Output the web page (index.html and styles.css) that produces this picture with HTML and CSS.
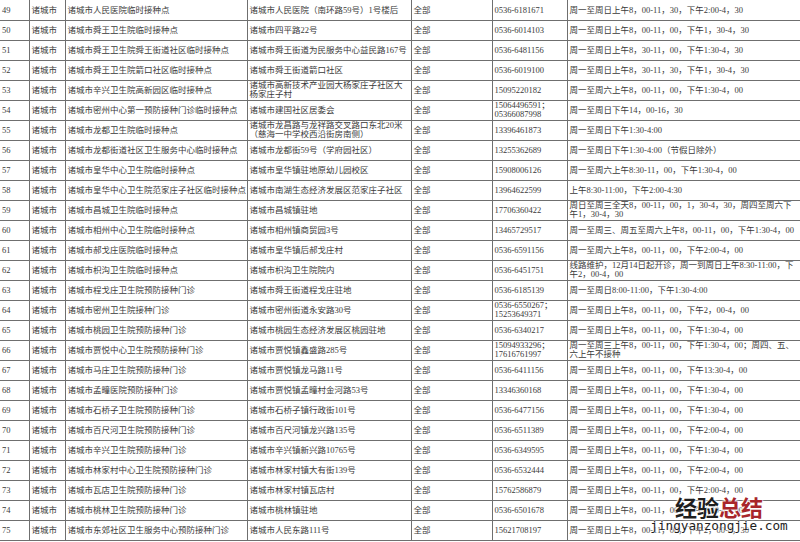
FILE: index.html
```html
<!DOCTYPE html>
<html lang="zh-CN">
<head>
<meta charset="utf-8">
<title>诸城市接种点</title>
<link rel="stylesheet" href="styles.css">
</head>
<body>
<div class="page">
<table class="grid">
<colgroup>
<col class="c-no"><col class="c-city"><col class="c-name"><col class="c-addr"><col class="c-scope"><col class="c-tel"><col class="c-time">
</colgroup>
<tbody>
<tr><td>49</td><td>诸城市</td><td>诸城市人民医院临时接种点</td><td>诸城市人民医院（南环路59号）1号楼后</td><td>全部</td><td>0536-6181671</td><td>周一至周日上午8，00-11，30，下午2:00-4，30</td></tr>
<tr><td>50</td><td>诸城市</td><td>诸城市舜王卫生院临时接种点</td><td>诸城市四平路22号</td><td>全部</td><td>0536-6014103</td><td>周一至周日上午8，00-11，00，下午1，30-4，30</td></tr>
<tr><td>51</td><td>诸城市</td><td>诸城市舜王卫生院舜王街道社区临时接种点</td><td>诸城市舜王街道为民服务中心益民路167号</td><td>全部</td><td>0536-6481156</td><td>周一至周日上午8，30-11，00，下午1:30-4，30</td></tr>
<tr><td>52</td><td>诸城市</td><td>诸城市舜王卫生院箭口社区临时接种点</td><td>诸城市舜王街道箭口社区</td><td>全部</td><td>0536-6019100</td><td>周一至周日上午8，30-11，30，下午1，30-4，30</td></tr>
<tr><td>53</td><td>诸城市</td><td>诸城市辛兴卫生院高新园区临时接种点</td><td class="two">诸城市高新技术产业园大杨家庄子社区大<br>杨家庄子村</td><td>全部</td><td>15095220182</td><td>周一至周六上午8，00-11，00，下午1:30-4，00</td></tr>
<tr><td>54</td><td>诸城市</td><td>诸城市密州中心第一预防接种门诊临时接种点</td><td>诸城市建国社区居委会</td><td>全部</td><td class="two">15064496591；<br>05366087998</td><td>周一至周日下午14，00-16，30</td></tr>
<tr><td>55</td><td>诸城市</td><td>诸城市龙都卫生院临时接种点</td><td class="two">诸城市龙昌路与龙祥路交叉路口东北20米<br>（慈海一中学校西沿街房南侧）</td><td>全部</td><td>13396461873</td><td>周一至周日下午1:30-4:00</td></tr>
<tr><td>56</td><td>诸城市</td><td>诸城市龙都街道社区卫生服务中心临时接种点</td><td>诸城市龙都街59号（学府园社区）</td><td>全部</td><td>13255362689</td><td>周一至周日下午1:30-4:00（节假日除外）</td></tr>
<tr><td>57</td><td>诸城市</td><td>诸城市皇华中心卫生院临时接种点</td><td>诸城市皇华镇驻地原幼儿园校区</td><td>全部</td><td>15908006126</td><td>周一至周六上午8:30-11，00，下午1:30-4，00</td></tr>
<tr><td>58</td><td>诸城市</td><td>诸城市皇华中心卫生院范家庄子社区临时接种点</td><td>诸城市南湖生态经济发展区范家庄子社区</td><td>全部</td><td>13964622599</td><td>上午8:30-11:00，下午2:00-4:30</td></tr>
<tr><td>59</td><td>诸城市</td><td>诸城市昌城卫生院临时接种点</td><td>诸城市昌城镇驻地</td><td>全部</td><td>17706360422</td><td class="two">周日至周三全天8，00-11，00，1，30-4，30，周四至周六下<br>午1，30-4，30</td></tr>
<tr><td>60</td><td>诸城市</td><td>诸城市相州中心卫生院临时接种点</td><td>诸城市相州镇商贸园3号</td><td>全部</td><td>13465729517</td><td>周一至周三、周五至周六上午8，00-11，00，下午1:30-4，00</td></tr>
<tr><td>61</td><td>诸城市</td><td>诸城市郝戈庄医院临时接种点</td><td>诸城市皇华镇后郝戈庄村</td><td>全部</td><td>0536-6591156</td><td>周一至周六上午8，00-11，00，下午2:00-4，00</td></tr>
<tr><td>62</td><td>诸城市</td><td>诸城市枳沟卫生院临时接种点</td><td>诸城市枳沟卫生院院内</td><td>全部</td><td>0536-6451751</td><td class="two">线路维护，12月14日起开诊，周一到周日上午8:30-11:00，下<br>午2，00-4，00</td></tr>
<tr><td>63</td><td>诸城市</td><td>诸城市程戈庄卫生院预防接种门诊</td><td>诸城市舜王街道程戈庄驻地</td><td>全部</td><td>0536-6185139</td><td>周一至周日8:00-11:00，下午1:30-4:00</td></tr>
<tr><td>64</td><td>诸城市</td><td>诸城市密州卫生院接种门诊</td><td>诸城市密州街道永安路30号</td><td>全部</td><td class="two">0536-6550267；<br>15253649371</td><td>周一至周日上午8，00-11，00，下午2，00-4，00</td></tr>
<tr><td>65</td><td>诸城市</td><td>诸城市桃园卫生院预防接种门诊</td><td>诸城市桃园生态经济发展区桃园驻地</td><td>全部</td><td>0536-6340217</td><td>周一至周日上午8，00-11，00，下午1:30-4，00</td></tr>
<tr><td>66</td><td>诸城市</td><td>诸城市贾悦中心卫生院预防接种门诊</td><td>诸城市贾悦镇鑫盛路285号</td><td>全部</td><td class="two">15094933296；<br>17616761997</td><td class="two">周一至周三上午8，00-11，00，下午1:30-4，00；周四、五、<br>六上午不接种</td></tr>
<tr><td>67</td><td>诸城市</td><td>诸城市马庄卫生院预防接种门诊</td><td>诸城市贾悦镇龙马路11号</td><td>全部</td><td>0536-6411156</td><td>周一至周日上午8，00-11，00，下午13:30-4，00</td></tr>
<tr><td>68</td><td>诸城市</td><td>诸城市孟疃医院预防接种门诊</td><td>诸城市贾悦镇孟疃村金河路53号</td><td>全部</td><td>13346360168</td><td>周一至周日上午8，00-11，00，下午1:30-4，00</td></tr>
<tr><td>69</td><td>诸城市</td><td>诸城市石桥子卫生院预防接种门诊</td><td>诸城市石桥子镇行政街101号</td><td>全部</td><td>0536-6477156</td><td>周一至周日上午8，00-11，00，下午1:30-4，00</td></tr>
<tr><td>70</td><td>诸城市</td><td>诸城市百尺河卫生院预防接种门诊</td><td>诸城市百尺河镇龙兴路135号</td><td>全部</td><td>0536-6511389</td><td>周一至周日上午8，00-11，00，下午2:00-4，00</td></tr>
<tr><td>71</td><td>诸城市</td><td>诸城市辛兴卫生院预防接种门诊</td><td>诸城市辛兴镇新兴路10765号</td><td>全部</td><td>0536-6349595</td><td>周一至周日上午8，00-11，00，下午1:30-4，00</td></tr>
<tr><td>72</td><td>诸城市</td><td>诸城市林家村中心卫生院预防接种门诊</td><td>诸城市林家村镇大有街139号</td><td>全部</td><td>0536-6532444</td><td>周一至周日上午8，00-11，00，下午2:00-4，00</td></tr>
<tr><td>73</td><td>诸城市</td><td>诸城市瓦店卫生院预防接种门诊</td><td>诸城市林家村镇瓦店村</td><td>全部</td><td>15762586879</td><td>周一至周日上午8，00-11，00，下午2:00-4，00</td></tr>
<tr><td>74</td><td>诸城市</td><td>诸城市桃林卫生院预防接种门诊</td><td>诸城市桃林镇驻地</td><td>全部</td><td>0536-6501678</td><td>周一至周日上午8，00-11，00，下午2:00-4，00</td></tr>
<tr><td>75</td><td>诸城市</td><td>诸城市东郊社区卫生服务中心预防接种门诊</td><td>诸城市人民东路111号</td><td>全部</td><td>15621708197</td><td>周一至周日上午8，00-11，00，下午2，00-4，30</td></tr>
</tbody>
</table>
<div class="watermark">
<div class="wm-title"><span class="wm-dark">经验</span><span class="wm-red">总结</span></div>
<div class="wm-url">jingyanzongjie.com</div>
</div>
</div>
</body>
</html>
```

FILE: styles.css
```css
html, body {
  margin: 0;
  padding: 0;
  background: #ffffff;
}

.page {
  position: relative;
  width: 800px;
  height: 542px;
  overflow: hidden;
}

.grid {
  width: 800px;
  table-layout: fixed;
  border-collapse: collapse;
  font-family: "Liberation Serif", "Noto Sans CJK SC", serif;
  font-size: 8.5px;
  color: #3a3a3a;
}

.c-no { width: 29px; }
.c-city { width: 36px; }
.c-name { width: 182px; }
.c-addr { width: 164px; }
.c-scope { width: 81px; }
.c-tel { width: 75px; }
.c-time { width: 233px; }

.grid tr {
  height: 20px;
}

.grid td {
  height: 19px;
  padding: 0 0 0 2px;
  border-bottom: 1px solid #6f6f6f;
  border-left: 1px solid #6f6f6f;
  vertical-align: middle;
  white-space: nowrap;
  overflow: hidden;
  line-height: 10px;
  box-sizing: border-box;
}

.grid td:first-child {
  border-left: none;
}

.grid td.two {
  line-height: 9px;
}

.watermark {
  position: absolute;
  left: 646px;
  top: 493px;
  width: 146px;
  display: flex;
  flex-direction: column;
  align-items: center;
  text-shadow: 0 0 2px #fff, 0 0 2px #fff, 0 0 3px #fff;
}

.wm-title {
  font-family: "Noto Sans CJK SC", sans-serif;
  font-weight: 700;
  font-size: 22px;
  line-height: 26px;
  letter-spacing: 0;
}

.wm-dark { color: #1e1e1e; }
.wm-red { color: #a8262b; }

.wm-url {
  font-family: "DejaVu Sans Mono", monospace;
  font-size: 12.7px;
  line-height: 14px;
  color: #1e1e1e;
}
```
